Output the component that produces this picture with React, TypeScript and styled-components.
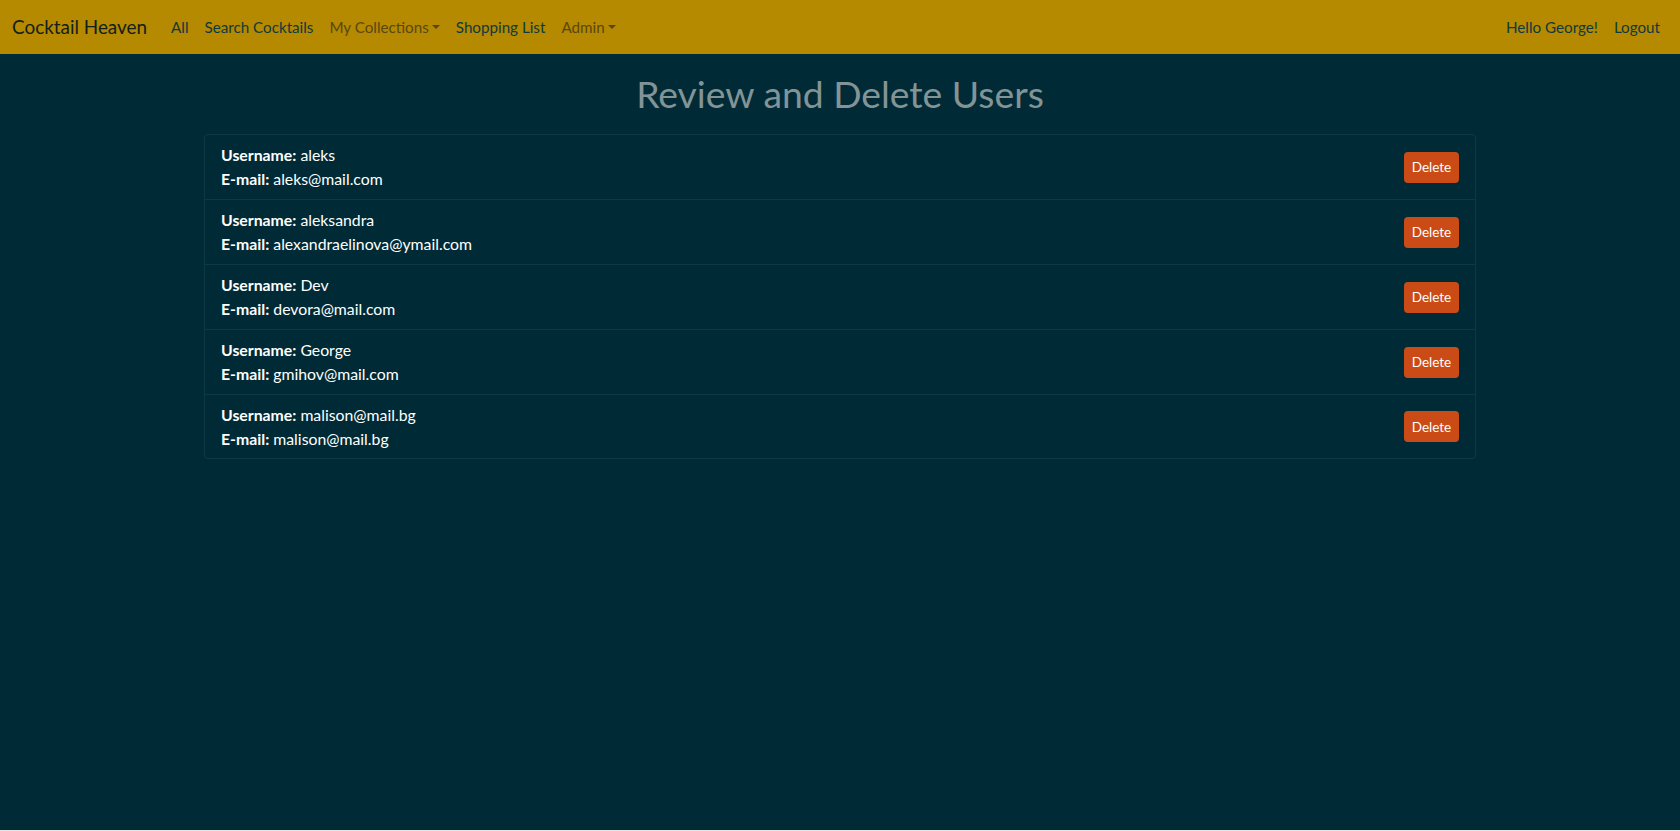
import React from "react";
import styled, { createGlobalStyle } from "styled-components";

const GlobalStyle = createGlobalStyle`
    html {
        background: #e6e6e6;
    }
    body {
        margin: 0;
        font-family: Lato, "Liberation Sans", sans-serif;
        font-size: 15.8px;
        line-height: 24px;
        color: #839496;
    }
    * {
        box-sizing: border-box;
    }
`;

const Page = styled.div`
    min-height: 830px;
    background: #002b36;
`;

const NavBar = styled.nav`
    height: 54px;
    padding: 0 12px;
    display: flex;
    align-items: center;
    background: #b58900;
    font-size: 15.2px;
`;

const Brand = styled.a`
    font-size: 18.9px;
    line-height: 30px;
    color: #12201c;
    margin-right: 16px;
    text-decoration: none;
`;

const NavList = styled.div<{ $right?: boolean }>`
    display: flex;
    align-items: center;
    margin-left: ${(p) => (p.$right ? "auto" : "0")};
`;

const NavLink = styled.a<{ $muted?: boolean }>`
    padding: 0 8px;
    color: ${(p) => (p.$muted ? "#5a4710" : "#0f3a3e")};
    text-decoration: none;
    display: flex;
    align-items: center;
`;

const Caret = styled.span`
    display: inline-block;
    margin-left: 3px;
    width: 0;
    height: 0;
    border-top: 4.5px solid currentColor;
    border-left: 4px solid transparent;
    border-right: 4px solid transparent;
`;

const Main = styled.main`
    width: 1272px;
    margin: 0 auto;
`;

const Title = styled.h1`
    margin: 16px 0 16px;
    font-size: 37.3px;
    line-height: 48px;
    font-weight: 400;
    text-align: center;
    color: #839496;
`;

const UserList = styled.ul`
    list-style: none;
    margin: 0;
    padding: 0;
    border: 1px solid #0b3945;
    border-radius: 4px;
`;

const UserRow = styled.li`
    display: flex;
    align-items: center;
    justify-content: space-between;
    padding: 8px 16px;
    height: 65px;
    border-bottom: 1px solid #0b3945;
    color: #ffffff;

    &:last-child {
        border-bottom: none;
        height: 63px;
    }
`;

const Info = styled.div`
    display: flex;
    flex-direction: column;
`;

const Label = styled.strong`
    font-weight: 700;
`;

const DeleteButton = styled.button`
    width: 55px;
    height: 31px;
    padding: 0;
    border: none;
    border-radius: 4px;
    background: #cb4b16;
    color: #ffffff;
    font-family: Lato, "Liberation Sans", sans-serif;
    font-size: 13.5px;
    cursor: pointer;
`;

const users = [
    { name: "aleks", email: "aleks@mail.com" },
    { name: "aleksandra", email: "alexandraelinova@ymail.com" },
    { name: "Dev", email: "devora@mail.com" },
    { name: "George", email: "gmihov@mail.com" },
    { name: "malison@mail.bg", email: "malison@mail.bg" },
];

export default function App() {
    return (
        <Page>
            <GlobalStyle />
            <NavBar>
                <Brand href="#">Cocktail Heaven</Brand>
                <NavList>
                    <NavLink href="#">All</NavLink>
                    <NavLink href="#">Search Cocktails</NavLink>
                    <NavLink href="#" $muted>
                        My Collections<Caret />
                    </NavLink>
                    <NavLink href="#">Shopping List</NavLink>
                    <NavLink href="#" $muted>
                        Admin<Caret />
                    </NavLink>
                </NavList>
                <NavList $right>
                    <NavLink href="#">Hello George!</NavLink>
                    <NavLink href="#">Logout</NavLink>
                </NavList>
            </NavBar>
            <Main>
                <Title>Review and Delete Users</Title>
                <UserList>
                    {users.map((u) => (
                        <UserRow key={u.name}>
                            <Info>
                                <span>
                                    <Label>Username:</Label> {u.name}
                                </span>
                                <span>
                                    <Label>E-mail:</Label> {u.email}
                                </span>
                            </Info>
                            <DeleteButton>Delete</DeleteButton>
                        </UserRow>
                    ))}
                </UserList>
            </Main>
        </Page>
    );
}
